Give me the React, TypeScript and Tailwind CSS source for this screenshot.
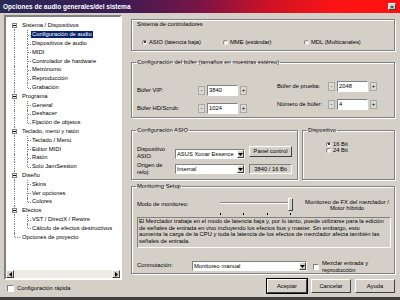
import React from "react";

type TreeNode = { label: string; children?: string[] };

const tree: TreeNode[] = [
  {
    label: "Sistema / Dispositivos",
    children: [
      "Configuración de audio",
      "Dispositivos de audio",
      "MIDI",
      "Controlador de hardware",
      "Metrónomo",
      "Reproducción",
      "Grabación",
    ],
  },
  { label: "Programa", children: ["General", "Deshacer", "Fijación de objetos"] },
  {
    label: "Teclado, menú y ratón",
    children: ["Teclado / Menú", "Editor MIDI", "Ratón", "Solo JamSession"],
  },
  { label: "Diseño", children: ["Skins", "Ver opciones", "Colores"] },
  {
    label: "Efectos",
    children: ["VST / DirectX / Rewire", "Cálculo de efectos destructivos"],
  },
  { label: "Opciones de proyecto" },
];

const raised =
  "border border-t-white border-l-white border-r-[#404040] border-b-[#404040] bg-[#d4d0c8]";
const sunken =
  "border border-t-[#808080] border-l-[#808080] border-r-white border-b-white";

function Arrow({ dir }: { dir: "down" | "left" | "right" }) {
  const pts = dir === "down" ? "0,0 5,0 2.5,3" : dir === "left" ? "3,0 3,5 0,2.5" : "0,0 0,5 3,2.5";
  const w = dir === "down" ? 5 : 3;
  const h = dir === "down" ? 3 : 5;
  return (
    <svg width={w} height={h} viewBox={`0 0 ${w} ${h}`}>
      <polygon points={pts} fill="#000" />
    </svg>
  );
}

function Radio({ checked, label }: { checked?: boolean; label: string }) {
  return (
    <div className="flex items-center gap-[2px] whitespace-nowrap">
      <span className="w-[5px] h-[5px] rounded-full bg-white border border-t-[#808080] border-l-[#808080] border-r-[#e8e8e8] border-b-[#e8e8e8] flex items-center justify-center">
        {checked && <span className="w-[2px] h-[2px] rounded-full bg-black" />}
      </span>
      <span>{label}</span>
    </div>
  );
}

function Group({
  title,
  className,
  children,
}: {
  title: string;
  className: string;
  children: React.ReactNode;
}) {
  return (
    <fieldset
      className={`border border-[#808080] shadow-[inset_1px_1px_0_#fff,1px_1px_0_#fff] ${className}`}
    >
      <legend className="ml-[4px] px-[1px] leading-[7px] whitespace-nowrap">{title}</legend>
      {children}
    </fieldset>
  );
}

function Spin({ label, labelW, value }: { label: string; labelW: string; value: string }) {
  return (
    <div className="flex items-center h-[12px]">
      <span className={`${labelW} whitespace-nowrap`}>{label}</span>
      <span className="w-[7px] h-[9px] border border-[#a8a8a8] bg-[#dcd9d2] flex items-center justify-center text-[6px] leading-none">
        -
      </span>
      <span className={`ml-[2px] w-[31px] h-[11px] bg-white ${sunken} pl-[1px] flex items-center`}>
        {value}
      </span>
      <span className="ml-[2px] w-[7px] h-[9px] border border-[#a8a8a8] bg-[#dcd9d2] flex items-center justify-center text-[6px] leading-none">
        +
      </span>
    </div>
  );
}

function Select({ value, className }: { value: string; className: string }) {
  return (
    <div className={`bg-white ${sunken} flex items-center ${className}`}>
      <span className="flex-1 pl-[1px] whitespace-nowrap overflow-hidden">{value}</span>
      <span className={`w-[7px] h-[8px] ${raised} flex items-center justify-center`}>
        <Arrow dir="down" />
      </span>
    </div>
  );
}

function Btn({ label, def }: { label: string; def?: boolean }) {
  return (
    <div
      className={`w-[40px] h-[14px] ${raised} flex items-center justify-center ${
        def ? "outline outline-1 outline-black" : ""
      }`}
    >
      {label}
    </div>
  );
}

function Tree() {
  const rows: React.ReactNode[] = [];
  tree.forEach((node, ni) => {
    const first = ni === 0;
    const last = ni === tree.length - 1;
    rows.push(
      <div key={node.label} className="relative h-[8.8px] flex items-center">
        <span
          className={
            first
              ? "absolute left-[8px] top-[4.4px] bottom-0 border-l border-dotted border-[#808080]"
              : last
              ? "absolute left-[8px] top-0 h-[4.4px] border-l border-dotted border-[#808080]"
              : "absolute left-[8px] top-0 bottom-0 border-l border-dotted border-[#808080]"
          }
        />
        {node.children ? (
          <span className="absolute left-[6px] top-[1.9px] w-[5px] h-[5px] bg-white border border-[#808080] flex items-center justify-center">
            <span className="w-[3px] h-px bg-black" />
          </span>
        ) : (
          <span className="absolute left-[9px] top-[4.4px] w-[5px] border-t border-dotted border-[#808080]" />
        )}
        <span className="ml-[16px] whitespace-nowrap">{node.label}</span>
      </div>
    );
    node.children?.forEach((c, ci) => {
      const lastChild = ci === node.children!.length - 1;
      const selected = c === "Configuración de audio";
      rows.push(
        <div key={c} className="relative h-[8.8px] flex items-center">
          <span className="absolute left-[8px] top-0 bottom-0 border-l border-dotted border-[#808080]" />
          <span
            className={
              lastChild
                ? "absolute left-[21px] top-0 h-[4.4px] border-l border-dotted border-[#808080]"
                : "absolute left-[21px] top-0 bottom-0 border-l border-dotted border-[#808080]"
            }
          />
          <span className="absolute left-[22px] top-[4.4px] w-[3px] border-t border-dotted border-[#808080]" />
          <span
            className={`ml-[25px] px-[1px] whitespace-nowrap ${
              selected ? "bg-[#0a246a] text-white" : ""
            }`}
          >
            {c}
          </span>
        </div>
      );
    });
  });

  return (
    <div
      className={`mt-[2px] h-[265px] bg-white border-[2px] border-t-[#808080] border-l-[#808080] border-r-white border-b-white flex flex-col`}
    >
      <div className="flex-1 overflow-hidden pt-[4.6px]">{rows}</div>
      <div className="h-[8px] flex">
        <span className={`w-[8px] h-[8px] ${raised} flex items-center justify-center`}>
          <Arrow dir="left" />
        </span>
        <span className="flex-1 bg-[#ecebe6]" />
        <span className={`w-[8px] h-[8px] ${raised} flex items-center justify-center`}>
          <Arrow dir="right" />
        </span>
      </div>
    </div>
  );
}

export default function App() {
  return (
    <div className="w-[400px] h-[300px] bg-[#d4d0c8] overflow-hidden flex flex-col font-['Liberation_Sans',Arial,sans-serif] text-[5.8px] leading-[7px] text-black border-b-[3px] border-b-[#404040]">
      {/* title bar */}
      <div className="h-[13px] shrink-0 flex items-center justify-between bg-[linear-gradient(90deg,#2a2a55_0%,#3c1c55_30%,#7a1446_50%,#d01224_68%,#ff1414_85%,#ff1010_100%)]">
        <span className="ml-[3px] text-white font-bold text-[6.5px] whitespace-nowrap">
          Opciones de audio generales/del sistema
        </span>
        <span
          className={`mr-[4px] w-[8px] h-[7px] ${raised} flex items-center justify-center text-[6px] leading-none font-bold`}
        >
          ×
        </span>
      </div>

      <div className="flex flex-1 px-[4px]">
        {/* left column */}
        <div className="w-[118px] flex flex-col">
          <Tree />
          <div className="mt-[5px] ml-[3px] flex items-center h-[7px]">
            <span className={`w-[7px] h-[7px] bg-white ${sunken}`} />
            <span className="ml-[3px] whitespace-nowrap">Configuración rápida</span>
          </div>
        </div>

        {/* right column */}
        <div className="ml-[9px] w-[264px] flex flex-col">
          <div className="mt-[6px] h-[32px] border border-[#808080] shadow-[inset_1px_1px_0_#fff,1px_1px_0_#fff] pl-[5px]">
            <div className="pt-[0.5px] whitespace-nowrap">Sistema de controladores</div>
            <div className="mt-[11px] ml-[5px] flex">
              <div className="w-[81px]">
                <Radio checked label="ASIO (latencia baja)" />
              </div>
              <div className="w-[81px]">
                <Radio label="MME (estándar)" />
              </div>
              <div>
                <Radio label="MDL (Multicanales)" />
              </div>
            </div>
          </div>

          <Group
            title="Configuración del búfer (tamaños en muestras estéreo)"
            className="mt-[7.5px] h-[59.5px]"
          >
            <div className="flex pl-[5px]">
              <div className="w-[140px] mt-[18.5px] flex flex-col gap-[6px]">
                <Spin label="Búfer VIP:" labelW="w-[61px]" value="3840" />
                <Spin label="Búfer HD/Scrub:" labelW="w-[61px]" value="1024" />
              </div>
              <div className="mt-[14.5px] flex flex-col gap-[6px]">
                <Spin label="Búfer de prueba:" labelW="w-[51px]" value="2048" />
                <Spin label="Número de búfer:" labelW="w-[51px]" value="4" />
              </div>
            </div>
          </Group>

          <div className="mt-[9px] flex gap-[4px]">
            <Group title="Configuración ASIO" className="w-[167px] h-[53px]">
              <div className="pl-[5px]">
                <div className="mt-[12px] h-[13px] flex">
                  <span className="w-[38px] leading-[6.5px]">
                    Dispositivo
                    <br />
                    ASIO:
                  </span>
                  <Select value="ASUS Xonar Essence" className="self-end w-[70px] h-[10px]" />
                  <span
                    className={`ml-[4px] w-[43px] h-[11px] ${raised} flex items-center justify-center whitespace-nowrap`}
                  >
                    Panel control
                  </span>
                </div>
                <div className="mt-[3px] h-[13px] flex">
                  <span className="w-[38px] leading-[6.5px]">
                    Origen de
                    <br />
                    reloj:
                  </span>
                  <Select value="Internal" className="mt-[2px] w-[70px] h-[10px]" />
                  <span
                    className={`ml-[4px] mt-[2px] w-[43px] h-[10px] ${sunken} flex items-center justify-center whitespace-nowrap`}
                  >
                    3840 / 16 Bit
                  </span>
                </div>
              </div>
            </Group>
            <Group title="Dispositivo" className="w-[93px] h-[53px]">
              <div className="pl-[23px] mt-[6.75px] flex flex-col">
                <div className="h-[6.5px] flex items-center">
                  <Radio checked label="16 Bit" />
                </div>
                <div className="h-[6.5px] flex items-center">
                  <Radio label="24 Bit" />
                </div>
              </div>
            </Group>
          </div>

          <Group title="Monitoring Setup" className="mt-[2.5px] h-[91.5px]">
            <div className="mt-[8.5px] h-[18px] flex pl-[5px]">
              <span className="w-[83px] mt-[2.5px] whitespace-nowrap">Modo de monitoreo:</span>
              <div className="relative w-[74px] h-[18px]">
                <span className="absolute left-0 right-[2px] top-[4px] h-[2px] border-t border-b border-t-[#808080] border-b-white" />
                <span className={`absolute left-[68px] top-0 w-[5px] h-[13px] ${raised}`} />
                <span className="absolute left-0 top-[15px] w-px h-[2px] bg-black" />
                <span className="absolute left-[23px] top-[15px] w-px h-[2px] bg-black" />
                <span className="absolute left-[47px] top-[15px] w-px h-[2px] bg-black" />
                <span className="absolute left-[70px] top-[15px] w-px h-[2px] bg-black" />
              </div>
              <span className="ml-[6px] w-[94px] mt-[0.75px] text-center leading-[6.5px] whitespace-nowrap">
                Monitoreo de FX del mezclador /
                <br />
                Motor híbrido
              </span>
            </div>
            <div
              className={`mt-[1px] ml-[5px] w-[254px] h-[31px] ${sunken} pl-[1px] leading-[6.5px] whitespace-nowrap`}
            >
              El Mezclador trabaja en el modo de latencia baja y, por lo tanto, puede utilizarse para la edición
              <br />
              de señales de entrada en vivo incluyendo los efectos bus y master. Sin embargo, esto
              <br />
              aumenta la carga de la CPU y toda la latencia de los efectos de mezclador afecta también las
              <br />
              señales de entrada.
            </div>
            <div className="mt-[13px] h-[12px] flex items-start pl-[5px]">
              <span className="w-[55px] mt-[0.5px] whitespace-nowrap">Conmutación:</span>
              <Select value="Monitoreo manual" className="w-[115px] h-[10px]" />
              <span className={`ml-[6px] mt-[3px] w-[6px] h-[6px] bg-white ${sunken}`} />
              <span className="ml-[3px] mt-[-1.5px] leading-[7px] whitespace-nowrap">
                Mezclar entrada y
                <br />
                reproducción
              </span>
            </div>
          </Group>

          <div className="mt-[5px] flex justify-end gap-[4px]">
            <Btn label="Aceptar" def />
            <Btn label="Cancelar" />
            <Btn label="Ayuda" />
          </div>
        </div>
      </div>
    </div>
  );
}
